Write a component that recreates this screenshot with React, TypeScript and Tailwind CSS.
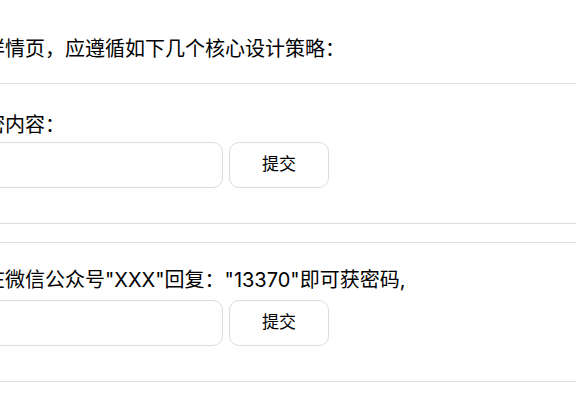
export default function App() {
  return (
    <div className="w-[576px] h-[400px] overflow-hidden bg-white text-black font-['Inter','Noto_Sans_CJK_SC',sans-serif]">
      <div className="ml-[-15px]">
        <div className="pt-[34px] pb-[19px] border-b border-[#dddddd]">
          <p className="text-[20px] leading-[30px] whitespace-nowrap">详情页，应遵循如下几个核心设计策略：</p>
        </div>

        <div className="pt-[26px] pb-[35px] border-b border-[#dddddd]">
          <p className="text-[20px] leading-[30px] whitespace-nowrap">密内容：</p>
          <div className="mt-[2px] flex gap-[6px]">
            <input className="w-[238px] h-[46px] rounded-[10px] border border-[#dcdcdc] outline-none px-3" />
            <button type="button" className="w-[100px] h-[46px] rounded-[10px] border border-[#dcdcdc] bg-white text-[17px]">
              提交
            </button>
          </div>
        </div>

        <div className="mt-[18px] pt-[22px] pb-[35px] border-y border-[#dddddd]">
          <p className="text-[20px] leading-[30px] whitespace-nowrap">在微信公众号"XXX"回复："13370"即可获密码,</p>
          <div className="mt-[5px] flex gap-[6px]">
            <input className="w-[238px] h-[46px] rounded-[10px] border border-[#dcdcdc] outline-none px-3" />
            <button type="button" className="w-[100px] h-[46px] rounded-[10px] border border-[#dcdcdc] bg-white text-[17px]">
              提交
            </button>
          </div>
        </div>
      </div>
    </div>
  );
}
